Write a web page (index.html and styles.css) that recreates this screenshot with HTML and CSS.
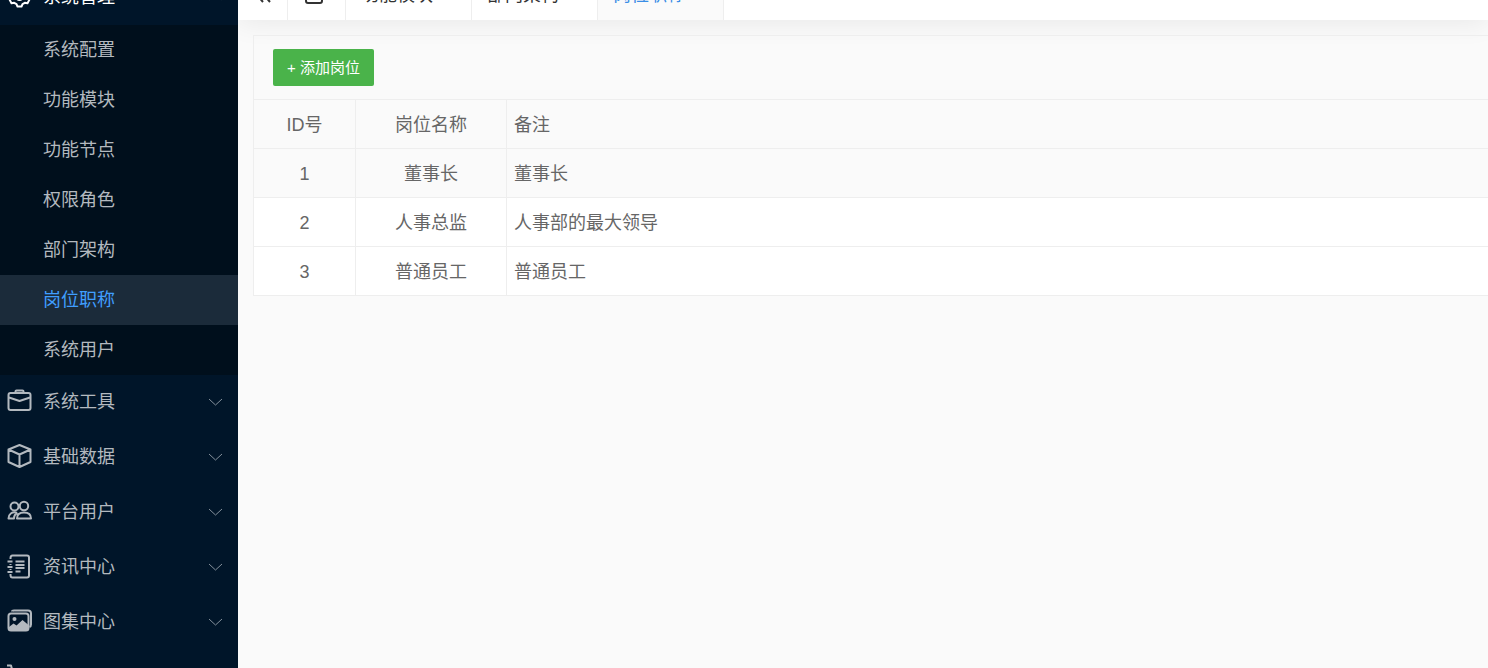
FILE: index.html
```html
<!DOCTYPE html>
<html lang="zh-CN">
<head>
<meta charset="utf-8">
<title>岗位职称</title>
<link rel="stylesheet" href="styles.css">
</head>
<body>
<svg class="defs" width="0" height="0" aria-hidden="true">
  <symbol id="chevron" viewBox="0 0 15 8"><path d="M1 1l6.5 6L14 1"/></symbol>
  <symbol id="close" viewBox="0 0 12 12"><path d="M1 1l10 10M11 1L1 11"/></symbol>
</svg>
<div class="app">
  <aside class="sidebar">
    <nav class="menu">
      <button class="group open" type="button">
        <svg class="icon" viewBox="0 0 25 25"><path d="M10.500 3h4l1 2.500 2.300 1.300 2.700-.5 1.800 3.400-1.800 2v2.200l1.800 2-1.800 3.400-2.700-.5-2.300 1.300-1 2.400h-4l-1-2.400-2.300-1.300-2.700.5-1.800-3.400 1.800-2v-2.200l-1.800-2 1.800-3.400 2.700.5 2.300-1.300z"/><circle cx="12.500" cy="12.500" r="3.500"/></svg>
        <span>系统管理</span>
        <svg class="arrow" viewBox="0 0 15 8"><use href="#chevron"/></svg>
      </button>
      <div class="submenu">
        <a href="#">系统配置</a>
        <a href="#">功能模块</a>
        <a href="#">功能节点</a>
        <a href="#">权限角色</a>
        <a href="#">部门架构</a>
        <a href="#" class="active" aria-current="page">岗位职称</a>
        <a href="#">系统用户</a>
      </div>
      <button class="group" type="button">
        <svg class="icon" viewBox="0 0 25 25"><rect x="1.500" y="4" width="22" height="17" rx="2"/><path d="M8.500 4V2.500q0-1 1-1h6q1 0 1 1V4M2 8.500l10.500 3.500L23 8.500"/></svg>
        <span>系统工具</span>
        <svg class="arrow" viewBox="0 0 15 8"><use href="#chevron"/></svg>
      </button>
      <button class="group" type="button">
        <svg class="icon" viewBox="0 0 25 25"><path d="M12.500 1L23.500 5.500V18L12.500 23 1.500 18V5.500zM1.500 5.500l11 5 11-5M12.500 10.500V23"/></svg>
        <span>基础数据</span>
        <svg class="arrow" viewBox="0 0 15 8"><use href="#chevron"/></svg>
      </button>
      <button class="group" type="button">
        <svg class="icon" viewBox="0 0 25 25"><circle cx="7.500" cy="7.500" r="4"/><circle cx="17" cy="7" r="4.200"/><path d="M10 19.500c0-4 3-6 7-6s7 2 7 6zM9.500 13.500C5 12.500 1.500 15 1.500 19.500H7c0-3 1-4.500 3.500-5.500"/></svg>
        <span>平台用户</span>
        <svg class="arrow" viewBox="0 0 15 8"><use href="#chevron"/></svg>
      </button>
      <button class="group" type="button">
        <svg class="icon" viewBox="0 0 25 25"><path d="M3.500 5V4q0-2.500 2-2.500h14.500q2 0 2 2v18q0 2-2 2H5.500q-2 0-2-2.500v-1M3.500 10v1M3.500 15v1M.5 7.500h5M.5 13h5M.5 18h5M8.500 7.500h9M8.500 11h9M8.500 14h9M8.500 17.500h5"/></svg>
        <span>资讯中心</span>
        <svg class="arrow" viewBox="0 0 15 8"><use href="#chevron"/></svg>
      </button>
      <button class="group" type="button">
        <svg class="icon" viewBox="0 0 25 25"><path d="M5 2.500q0-1 2-1h14q3 0 3 3v11q0 2-1.500 2.500"/><rect x="1.500" y="4.500" width="20" height="17" rx="2.500"/><circle class="solid" cx="7.500" cy="10" r="2"/><path class="solid" d="M2 18l4.500-3.500 3 2L15.500 11l6 5v3q0 2.500-2.500 2.500H4q-2 0-2-2z"/></svg>
        <span>图集中心</span>
        <svg class="arrow" viewBox="0 0 15 8"><use href="#chevron"/></svg>
      </button>
      <button class="group" type="button" aria-label="购物">
        <svg class="icon" viewBox="0 0 25 25"><path d="M0 1.500h4l4 15h12l3-10H6"/><circle cx="9" cy="21" r="1.500"/><circle cx="19" cy="21" r="1.500"/></svg>
      </button>
    </nav>
  </aside>
  <main class="main">
    <header class="tabs">
      <button class="tool" type="button" aria-label="收起"><svg class="tool-icon" viewBox="0 0 18 18"><path d="M9 2L3 9l6 7M16 2l-6 7 6 7"/></svg></button>
      <button class="tool home" type="button" aria-label="首页"><svg class="tool-icon" viewBox="0 0 18 18"><path d="M1 7v8q0 2 2 2h12q2 0 2-2V7L9 1z"/></svg></button>
      <a class="tab" href="#"><span>功能模块</span><svg class="close" viewBox="0 0 12 12"><use href="#close"/></svg></a>
      <a class="tab" href="#"><span>部门架构</span><svg class="close" viewBox="0 0 12 12"><use href="#close"/></svg></a>
      <a class="tab active" href="#"><span>岗位职称</span><svg class="close" viewBox="0 0 12 12"><use href="#close"/></svg></a>
    </header>
    <section class="panel">
      <div class="toolbar"><button class="add" type="button">+ 添加岗位</button></div>
      <table class="grid">
        <thead>
          <tr><th class="id">ID号</th><th class="name">岗位名称</th><th class="note">备注</th></tr>
        </thead>
        <tbody>
          <tr class="hover"><td>1</td><td>董事长</td><td class="note">董事长</td></tr>
          <tr><td>2</td><td>人事总监</td><td class="note">人事部的最大领导</td></tr>
          <tr><td>3</td><td>普通员工</td><td class="note">普通员工</td></tr>
        </tbody>
      </table>
    </section>
  </main>
</div>
</body>
</html>
```
FILE: styles.css
```css
* { box-sizing: border-box; }

body {
  margin: 0;
  overflow: hidden;
  background: #fafafa;
  color: #666;
  font: 18px/24px "Liberation Sans", "Noto Sans CJK SC", sans-serif;
}

button { font: inherit; border: 0; cursor: pointer; }
a { color: inherit; text-decoration: none; }
svg { fill: none; stroke: currentColor; flex: none; }
.defs { position: absolute; }

.app {
  display: grid;
  grid-template-columns: 238px minmax(0, 1fr);
  height: 100vh;
}

/* Sidebar */
.sidebar {
  overflow: hidden;
  background: #001529;
  color: #b3b9bf;
}

/* The menu and the tab bar are both scrolled up by 30px. */
.menu, .tabs { margin-top: -30px; }

.group {
  display: flex;
  align-items: center;
  gap: 11px;
  width: 100%;
  height: 55px;
  padding: 0 15px 2px 7px;
  background: none;
  color: inherit;
  text-align: left;
}
.group.open { color: #fff; }
.icon { width: 25px; height: 25px; stroke-width: 2; stroke-linejoin: round; }
.icon .solid { fill: currentColor; stroke: none; }
.arrow { width: 15px; height: 8px; margin-left: auto; color: #84909b; }
.group.open .arrow { transform: rotate(180deg); }

.submenu { background: #000f1c; }
.submenu a {
  display: block;
  height: 50px;
  padding-left: 43px;
  line-height: 50px;
}
.submenu .active { background: #1b2b3a; color: #409eff; }

/* Tab bar */
.main { min-width: 0; overflow: hidden; }
.tabs {
  display: flex;
  height: 50px;
  background: #fff;
  box-shadow: 0 2px 28px rgba(0, 0, 0, .08);
  color: #333;
}
.tool {
  display: grid;
  place-items: center;
  width: 50px;
  padding: 0;
  border-right: 1px solid #eee;
  background: none;
  color: #333;
}
.tool.home { width: 58px; padding-right: 5px; }
.tool-icon { width: 18px; height: 18px; stroke-width: 2; }
.tab {
  display: flex;
  align-items: center;
  justify-content: space-between;
  width: 126px;
  padding: 0 15px;
  border-right: 1px solid #eee;
}
.tab.active { background: #fafafa; color: #3a8ee6; }
.close { width: 12px; height: 12px; color: #bbb; }

/* Content */
.panel {
  margin: 15px 0 0 15px;
  border: solid #eee;
  border-width: 1px 0 0 1px;
}
.toolbar { padding: 13px 19px; }
.add {
  display: block;
  height: 37px;
  padding: 1px 14px 0;
  border-radius: 2px;
  background: #4ab34a;
  color: #fff;
  font-size: 15px;
}
.grid {
  width: 100%;
  border-collapse: separate;
  border-spacing: 0;
  border-top: 1px solid #eee;
  table-layout: fixed;
}
.grid th, .grid td {
  height: 49px;
  padding: 1px 7px 0;
  border: solid #eee;
  border-width: 0 1px 1px 0;
  font-weight: 400;
  text-align: center;
}
.grid .id { width: 102px; }
.grid .name { width: 151px; }
.grid .note { border-right: 0; text-align: left; }
.grid tbody tr { background: #fff; }
.grid tbody .hover { background: #fafafa; }
```
